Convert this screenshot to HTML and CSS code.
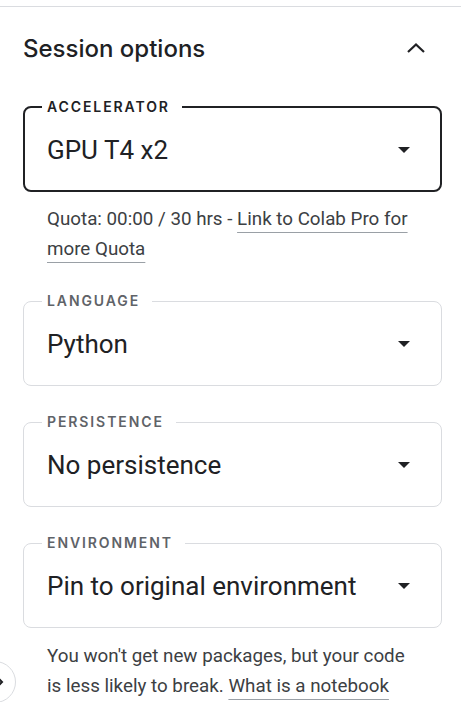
FILE: index.html
```html
<!DOCTYPE html>
<html>
<head>
<meta charset="utf-8">
<link rel="stylesheet" href="styles.css">
</head>
<body>
<div class="panel">
  <div class="header">
    <h2 class="title">Session options</h2>
    <svg class="chev-up" width="20" height="12" viewBox="0 0 20 12"><path d="M2 10 L10 2.5 L18 10" fill="none" stroke="#202124" stroke-width="2.2"/></svg>
  </div>

  <fieldset class="field field-active">
    <legend class="label">ACCELERATOR</legend>
    <div class="value-row"><span class="value">GPU T4 x2</span><span class="caret"></span></div>
  </fieldset>
  <p class="help">Quota: 00:00 / 30 hrs - <a class="link">Link to Colab Pro for more Quota</a></p>

  <fieldset class="field">
    <legend class="label">LANGUAGE</legend>
    <div class="value-row"><span class="value">Python</span><span class="caret"></span></div>
  </fieldset>

  <fieldset class="field">
    <legend class="label">PERSISTENCE</legend>
    <div class="value-row"><span class="value">No persistence</span><span class="caret"></span></div>
  </fieldset>

  <fieldset class="field">
    <legend class="label">ENVIRONMENT</legend>
    <div class="value-row"><span class="value">Pin to original environment</span><span class="caret"></span></div>
  </fieldset>
  <p class="help help-last">You won't get new packages, but your code is less likely to break. <a class="link">What is a notebook</a></p>
</div>
<div class="side-btn"><svg width="12" height="12" viewBox="0 0 12 12"><path d="M3 2 L7 6 L3 10" fill="none" stroke="#202124" stroke-width="2"/></svg></div>
</body>
</html>
```
FILE: styles.css
```css
html, body {
  margin: 0;
  padding: 0;
  background: #ffffff;
  overflow: hidden;
}
body {
  font-family: Roboto, "Noto Sans", sans-serif;
  color: #202124;
  width: 461px;
  height: 702px;
  position: relative;
}
.panel {
  margin-top: 6px;
  border-top: 1px solid #dadce0;
  padding: 0 19px 0 23px;
}
.header {
  display: flex;
  align-items: center;
  justify-content: space-between;
  height: 82px;
  margin-bottom: 10px;
}
.title {
  margin: 0;
  font-family: Inter, "Noto Sans", sans-serif;
  font-size: 24px;
  font-weight: 500;
  letter-spacing: 0;
  color: #202124;
}
.chev-up {
  margin-right: 16px;
}
.field {
  margin: 0;
  border: 1px solid #dadce0;
  border-radius: 8px;
  padding: 0 23px 24px 23px;
  min-width: 0;
}
.field-active {
  border: 2px solid #202124;
  padding: 0 22px 23px 22px;
}
.label {
  font-family: Inter, "Noto Sans", sans-serif;
  font-size: 14px;
  line-height: 16px;
  font-weight: 600;
  letter-spacing: 1.9px;
  color: #5f6368;
  padding: 0 12px 0 5px;
  margin-left: -5px;
}
.field-active .label {
  color: #202124;
}
.value-row {
  display: flex;
  align-items: center;
  justify-content: space-between;
  height: 34px;
  margin-top: 18px;
}
.value {
  font-size: 26px;
  line-height: 34px;
  color: #202124;
}
.caret {
  width: 0;
  height: 0;
  border-left: 6px solid transparent;
  border-right: 6px solid transparent;
  border-top: 6px solid #202124;
  margin-right: 8px;
}
.help {
  margin: 12px 0 29px 24px;
  font-size: 18.8px;
  line-height: 30px;
  color: #3c4043;
  padding-right: 27px;
}
.help-last {
  margin-top: 13px;
}
.link {
  color: #3c4043;
  text-decoration: underline;
  text-decoration-color: #9aa0a6;
  text-underline-offset: 7px;
  text-decoration-thickness: 1px;
}
.field + .field {
  margin-top: 28px;
}
.side-btn {
  position: absolute;
  left: -26px;
  top: 661px;
  width: 40px;
  height: 40px;
  border: 1px solid #dadce0;
  border-radius: 50%;
  background: #fff;
  display: flex;
  align-items: center;
  justify-content: center;
}
.side-btn svg {
  margin-left: 12px;
}
```
